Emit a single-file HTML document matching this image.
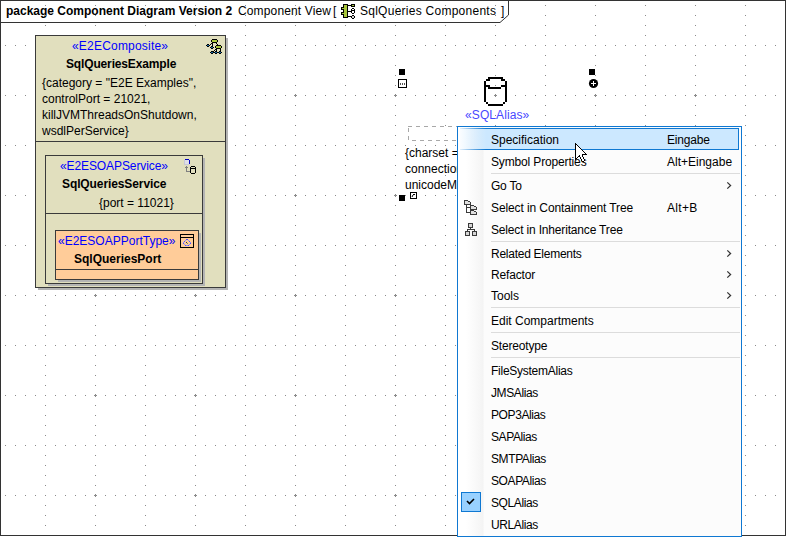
<!DOCTYPE html>
<html><head><meta charset="utf-8">
<style>
html,body{margin:0;padding:0;}
body{width:786px;height:537px;overflow:hidden;position:relative;background:#fff;font-family:"Liberation Sans",sans-serif;}
.a{position:absolute;}
.t{position:absolute;font-size:12px;line-height:16px;white-space:pre;color:#000;}
.b{font-weight:bold;}
.st{color:#0000ff;}
.mi{position:absolute;left:491px;font-size:12px;line-height:16px;white-space:pre;color:#000;}
.sc{position:absolute;left:667px;font-size:12px;line-height:16px;white-space:pre;color:#000;}
.sep{position:absolute;left:491px;width:249px;height:1px;background:#dcdcdc;}
svg{position:absolute;left:0;top:0;}
</style></head>
<body>
<div class="a" style="left:0;top:0;width:786px;height:536px;box-sizing:border-box;border:1px solid #333;"></div>
<svg width="786" height="537"><path d="M0 22.5 H500 L508.5 15 V0" fill="none" stroke="#333" stroke-width="1"/></svg>
<div class="t b" style="left:6px;top:3px;">package Component Diagram Version 2</div>
<div class="t" style="left:238px;top:3px;letter-spacing:0.14px">Component View</div>
<div class="t" style="left:333px;top:3px;">[</div>
<div class="t" style="left:360px;top:3px;letter-spacing:0.26px">SqlQueries Components</div>
<div class="t" style="left:501px;top:3px;">]</div>
<svg width="786" height="537" shape-rendering="crispEdges">
  <defs>
    <pattern id="gh" x="0" y="0" width="10" height="50" patternUnits="userSpaceOnUse"><rect x="5" y="45" width="1" height="1" fill="#8a8a8a"/></pattern>
    <pattern id="gv" x="0" y="0" width="50" height="10" patternUnits="userSpaceOnUse"><rect x="45" y="5" width="1" height="1" fill="#8a8a8a"/></pattern>
    <pattern id="gc" x="0" y="0" width="100" height="100" patternUnits="userSpaceOnUse"><rect x="94" y="95" width="3" height="1" fill="#8a8a8a"/><rect x="95" y="94" width="1" height="3" fill="#8a8a8a"/></pattern>
  </defs>
  <rect x="1" y="23" width="784" height="512" fill="url(#gh)"/>
  <rect x="1" y="1" width="784" height="534" fill="url(#gv)"/>
  <rect x="1" y="1" width="784" height="534" fill="url(#gc)"/>
  <rect x="1" y="1" width="784" height="22" fill="url(#gh)"/>
</svg>
<svg width="786" height="537" shape-rendering="crispEdges"><rect x="343" y="4" width="5" height="1" fill="#000"/><rect x="351" y="4" width="4" height="1" fill="#000"/><rect x="343" y="5" width="1" height="1" fill="#000"/><rect x="344" y="5" width="3" height="1" fill="#a8c63c"/><rect x="347" y="5" width="5" height="1" fill="#000"/><rect x="352" y="5" width="2" height="1" fill="#a8c63c"/><rect x="354" y="5" width="1" height="1" fill="#000"/><rect x="343" y="6" width="1" height="1" fill="#000"/><rect x="344" y="6" width="3" height="1" fill="#a8c63c"/><rect x="347" y="6" width="1" height="1" fill="#000"/><rect x="351" y="6" width="4" height="1" fill="#000"/><rect x="341" y="7" width="3" height="1" fill="#000"/><rect x="344" y="7" width="3" height="1" fill="#a8c63c"/><rect x="347" y="7" width="1" height="1" fill="#000"/><rect x="341" y="8" width="1" height="1" fill="#000"/><rect x="342" y="8" width="5" height="1" fill="#a8c63c"/><rect x="347" y="8" width="1" height="1" fill="#000"/><rect x="352" y="8" width="2" height="1" fill="#000"/><rect x="341" y="9" width="3" height="1" fill="#000"/><rect x="344" y="9" width="3" height="1" fill="#a8c63c"/><rect x="347" y="9" width="1" height="1" fill="#000"/><rect x="351" y="9" width="1" height="1" fill="#000"/><rect x="352" y="9" width="2" height="1" fill="#fff"/><rect x="354" y="9" width="1" height="1" fill="#000"/><rect x="343" y="10" width="1" height="1" fill="#000"/><rect x="344" y="10" width="3" height="1" fill="#a8c63c"/><rect x="347" y="10" width="1" height="1" fill="#000"/><rect x="351" y="10" width="4" height="1" fill="#000"/><rect x="343" y="11" width="1" height="1" fill="#000"/><rect x="344" y="11" width="3" height="1" fill="#a8c63c"/><rect x="347" y="11" width="5" height="1" fill="#000"/><rect x="352" y="11" width="2" height="1" fill="#fff"/><rect x="354" y="11" width="1" height="1" fill="#000"/><rect x="341" y="12" width="3" height="1" fill="#000"/><rect x="344" y="12" width="3" height="1" fill="#a8c63c"/><rect x="347" y="12" width="1" height="1" fill="#000"/><rect x="351" y="12" width="1" height="1" fill="#000"/><rect x="352" y="12" width="2" height="1" fill="#fff"/><rect x="354" y="12" width="1" height="1" fill="#000"/><rect x="341" y="13" width="1" height="1" fill="#000"/><rect x="342" y="13" width="5" height="1" fill="#a8c63c"/><rect x="347" y="13" width="1" height="1" fill="#000"/><rect x="352" y="13" width="2" height="1" fill="#000"/><rect x="341" y="14" width="3" height="1" fill="#000"/><rect x="344" y="14" width="3" height="1" fill="#a8c63c"/><rect x="347" y="14" width="1" height="1" fill="#000"/><rect x="343" y="15" width="1" height="1" fill="#000"/><rect x="344" y="15" width="3" height="1" fill="#a8c63c"/><rect x="347" y="15" width="1" height="1" fill="#000"/><rect x="352" y="15" width="2" height="1" fill="#000"/><rect x="343" y="16" width="1" height="1" fill="#000"/><rect x="344" y="16" width="3" height="1" fill="#a8c63c"/><rect x="347" y="16" width="5" height="1" fill="#000"/><rect x="352" y="16" width="2" height="1" fill="#d8d8d8"/><rect x="354" y="16" width="1" height="1" fill="#000"/><rect x="343" y="17" width="5" height="1" fill="#000"/><rect x="351" y="17" width="1" height="1" fill="#000"/><rect x="352" y="17" width="2" height="1" fill="#d8d8d8"/><rect x="354" y="17" width="1" height="1" fill="#000"/><rect x="352" y="18" width="2" height="1" fill="#000"/></svg>

<div class="a" style="left:38px;top:38px;width:190px;height:252px;background:#b4b4b4;"></div>
<div class="a" style="left:35px;top:35px;width:191px;height:253px;box-sizing:border-box;border:1px solid #3a3a3a;background:#e1dfbe;"></div>
<div class="a" style="left:36px;top:141px;width:189px;height:1px;background:#3a3a3a;"></div>
<div class="t st" style="left:72px;top:38px;letter-spacing:0.2px">«E2EComposite»</div>
<div class="t b" style="left:66px;top:56px;letter-spacing:-0.15px">SqlQueriesExample</div>
<div class="t" style="left:42px;top:75px;">{category = "E2E Examples",</div>
<div class="t" style="left:42px;top:91px;">controlPort = 21021,</div>
<div class="t" style="left:42px;top:107px;">killJVMThreadsOnShutdown,</div>
<div class="t" style="left:42px;top:123px;">wsdlPerService}</div>
<div class="a" style="left:48px;top:158px;width:157px;height:128px;background:#b4b4b4;"></div>
<div class="a" style="left:45px;top:155px;width:158px;height:129px;box-sizing:border-box;border:1px solid #3a3a3a;background:#e1dfbe;"></div>
<div class="a" style="left:46px;top:213px;width:156px;height:1px;background:#3a3a3a;"></div>
<div class="t st" style="left:60px;top:158px;letter-spacing:-0.1px">«E2ESOAPService»</div>
<div class="t b" style="left:62px;top:176px;letter-spacing:-0.1px">SqlQueriesService</div>
<div class="t" style="left:99px;top:195px;">{port = 11021}</div>
<div class="a" style="left:58px;top:233px;width:143px;height:49px;background:#b4b4b4;"></div>
<div class="a" style="left:55px;top:230px;width:144px;height:50px;box-sizing:border-box;border:1px solid #3a3a3a;background:#ffcc99;"></div>
<div class="a" style="left:56px;top:269px;width:142px;height:1px;background:#3a3a3a;"></div>
<div class="t st" style="left:58px;top:233px;">«E2ESOAPPortType»</div>
<div class="t b" style="left:74px;top:251px;">SqlQueriesPort</div>
<svg width="786" height="537" shape-rendering="crispEdges"><rect x="212" y="39" width="5" height="1" fill="#000"/><rect x="211" y="40" width="1" height="1" fill="#000"/><rect x="212" y="40" width="5" height="1" fill="#a8c63c"/><rect x="217" y="40" width="1" height="1" fill="#000"/><rect x="211" y="41" width="1" height="1" fill="#000"/><rect x="212" y="41" width="5" height="1" fill="#a8c63c"/><rect x="217" y="41" width="1" height="1" fill="#000"/><rect x="212" y="42" width="5" height="1" fill="#000"/><rect x="211" y="43" width="2" height="1" fill="#000"/><rect x="216" y="43" width="1" height="1" fill="#000"/><rect x="207" y="44" width="2" height="1" fill="#000"/><rect x="210" y="44" width="1" height="1" fill="#000"/><rect x="212" y="44" width="1" height="1" fill="#000"/><rect x="217" y="44" width="1" height="1" fill="#000"/><rect x="206" y="45" width="1" height="1" fill="#000"/><rect x="207" y="45" width="2" height="1" fill="#1e6aa0"/><rect x="209" y="45" width="1" height="1" fill="#000"/><rect x="212" y="45" width="1" height="1" fill="#000"/><rect x="216" y="45" width="5" height="1" fill="#000"/><rect x="207" y="46" width="2" height="1" fill="#000"/><rect x="211" y="46" width="2" height="1" fill="#000"/><rect x="215" y="46" width="1" height="1" fill="#000"/><rect x="216" y="46" width="5" height="1" fill="#a8c63c"/><rect x="221" y="46" width="1" height="1" fill="#000"/><rect x="210" y="47" width="1" height="1" fill="#000"/><rect x="211" y="47" width="2" height="1" fill="#1e6aa0"/><rect x="213" y="47" width="1" height="1" fill="#000"/><rect x="215" y="47" width="1" height="1" fill="#000"/><rect x="216" y="47" width="5" height="1" fill="#a8c63c"/><rect x="221" y="47" width="1" height="1" fill="#000"/><rect x="211" y="48" width="2" height="1" fill="#000"/><rect x="216" y="48" width="5" height="1" fill="#000"/><rect x="215" y="49" width="2" height="1" fill="#000"/><rect x="220" y="49" width="1" height="1" fill="#000"/><rect x="214" y="50" width="1" height="1" fill="#000"/><rect x="216" y="50" width="1" height="1" fill="#000"/><rect x="220" y="50" width="1" height="1" fill="#000"/><rect x="211" y="51" width="3" height="1" fill="#000"/><rect x="215" y="51" width="2" height="1" fill="#000"/><rect x="219" y="51" width="2" height="1" fill="#000"/><rect x="210" y="52" width="1" height="1" fill="#000"/><rect x="211" y="52" width="2" height="1" fill="#1e6aa0"/><rect x="213" y="52" width="2" height="1" fill="#000"/><rect x="215" y="52" width="2" height="1" fill="#1e6aa0"/><rect x="217" y="52" width="2" height="1" fill="#000"/><rect x="219" y="52" width="2" height="1" fill="#1e6aa0"/><rect x="221" y="52" width="1" height="1" fill="#000"/><rect x="211" y="53" width="2" height="1" fill="#000"/><rect x="215" y="53" width="2" height="1" fill="#000"/><rect x="219" y="53" width="2" height="1" fill="#000"/><rect x="185" y="159" width="4" height="1" fill="#0000c0"/><rect x="184" y="160" width="1" height="1" fill="#c8c8d8"/><rect x="185" y="160" width="4" height="1" fill="#e0e0e8"/><rect x="189" y="160" width="1" height="1" fill="#0000c0"/><rect x="184" y="161" width="1" height="1" fill="#c8c8d8"/><rect x="185" y="161" width="4" height="1" fill="#e0e0e8"/><rect x="189" y="161" width="1" height="1" fill="#0000c0"/><rect x="184" y="162" width="1" height="1" fill="#c8c8d8"/><rect x="185" y="162" width="4" height="1" fill="#e0e0e8"/><rect x="189" y="162" width="1" height="1" fill="#0000c0"/><rect x="184" y="163" width="1" height="1" fill="#c8c8d8"/><rect x="185" y="163" width="4" height="1" fill="#e0e0e8"/><rect x="189" y="163" width="1" height="1" fill="#0000c0"/><rect x="184" y="164" width="5" height="1" fill="#c8c8d8"/><rect x="186" y="166" width="1" height="1" fill="#808080"/><rect x="191" y="166" width="4" height="1" fill="#000"/><rect x="185" y="167" width="3" height="1" fill="#808080"/><rect x="190" y="167" width="1" height="1" fill="#000"/><rect x="195" y="167" width="1" height="1" fill="#000"/><rect x="186" y="168" width="1" height="1" fill="#808080"/><rect x="190" y="168" width="6" height="1" fill="#000"/><rect x="186" y="169" width="1" height="1" fill="#808080"/><rect x="190" y="169" width="1" height="1" fill="#000"/><rect x="195" y="169" width="1" height="1" fill="#000"/><rect x="186" y="170" width="1" height="1" fill="#808080"/><rect x="190" y="170" width="1" height="1" fill="#000"/><rect x="195" y="170" width="1" height="1" fill="#000"/><rect x="186" y="171" width="4" height="1" fill="#808080"/><rect x="190" y="171" width="1" height="1" fill="#000"/><rect x="195" y="171" width="1" height="1" fill="#000"/><rect x="190" y="172" width="1" height="1" fill="#000"/><rect x="195" y="172" width="1" height="1" fill="#000"/><rect x="191" y="173" width="4" height="1" fill="#000"/><rect x="180.5" y="234.5" width="13" height="13" fill="none" stroke="#000"/><rect x="181" y="237" width="12" height="1" fill="#000"/><rect x="186" y="239" width="2" height="1" fill="#5050ff"/><rect x="185" y="240" width="1" height="1" fill="#9090ff"/><rect x="188" y="240" width="1" height="1" fill="#9090ff"/><rect x="184" y="241" width="1" height="1" fill="#5050ff"/><rect x="189" y="241" width="1" height="1" fill="#5050ff"/><rect x="183" y="242" width="1" height="1" fill="#9090ff"/><rect x="190" y="242" width="1" height="1" fill="#9090ff"/><rect x="183" y="243" width="1" height="1" fill="#5050ff"/><rect x="190" y="243" width="1" height="1" fill="#5050ff"/><rect x="184" y="244" width="1" height="1" fill="#9090ff"/><rect x="189" y="244" width="1" height="1" fill="#9090ff"/><rect x="185" y="245" width="1" height="1" fill="#5050ff"/><rect x="186" y="245" width="2" height="1" fill="#9090ff"/><rect x="188" y="245" width="1" height="1" fill="#5050ff"/><rect x="186" y="242" width="1" height="1" fill="#333"/><rect x="187" y="243" width="1" height="1" fill="#7a9a50"/></svg>
<svg width="786" height="537" shape-rendering="crispEdges"><rect x="399" y="69" width="6" height="6" fill="#000"/><rect x="398.5" y="79.5" width="8" height="8" fill="#fff" stroke="#000"/><rect x="400" y="83" width="1" height="2" fill="#555"/><rect x="402" y="83" width="1" height="2" fill="#555"/><rect x="404" y="83" width="1" height="2" fill="#555"/><rect x="589" y="69" width="6" height="6" fill="#000"/><circle cx="593.5" cy="83.5" r="4.6" fill="#000" shape-rendering="auto"/><rect x="593" y="81" width="1" height="5" fill="#fff"/><rect x="591" y="83" width="5" height="1" fill="#fff"/><rect x="488" y="77" width="15" height="1" fill="#000"/><rect x="488" y="78" width="15" height="1" fill="#000"/><rect x="486" y="79" width="4" height="1" fill="#000"/><rect x="501" y="79" width="4" height="1" fill="#000"/><rect x="486" y="80" width="4" height="1" fill="#000"/><rect x="501" y="80" width="4" height="1" fill="#000"/><rect x="484" y="81" width="2" height="1" fill="#000"/><rect x="505" y="81" width="2" height="1" fill="#000"/><rect x="484" y="82" width="2" height="1" fill="#000"/><rect x="505" y="82" width="2" height="1" fill="#000"/><rect x="484" y="83" width="2" height="1" fill="#000"/><rect x="505" y="83" width="2" height="1" fill="#000"/><rect x="484" y="84" width="2" height="1" fill="#000"/><rect x="505" y="84" width="2" height="1" fill="#000"/><rect x="484" y="85" width="6" height="1" fill="#000"/><rect x="501" y="85" width="6" height="1" fill="#000"/><rect x="484" y="86" width="6" height="1" fill="#000"/><rect x="501" y="86" width="6" height="1" fill="#000"/><rect x="484" y="87" width="2" height="1" fill="#000"/><rect x="488" y="87" width="13" height="1" fill="#000"/><rect x="505" y="87" width="2" height="1" fill="#000"/><rect x="484" y="88" width="2" height="1" fill="#000"/><rect x="488" y="88" width="13" height="1" fill="#000"/><rect x="505" y="88" width="2" height="1" fill="#000"/><rect x="484" y="89" width="2" height="1" fill="#000"/><rect x="505" y="89" width="2" height="1" fill="#000"/><rect x="484" y="90" width="2" height="1" fill="#000"/><rect x="505" y="90" width="2" height="1" fill="#000"/><rect x="484" y="91" width="2" height="1" fill="#000"/><rect x="505" y="91" width="2" height="1" fill="#000"/><rect x="484" y="92" width="2" height="1" fill="#000"/><rect x="505" y="92" width="2" height="1" fill="#000"/><rect x="484" y="93" width="2" height="1" fill="#000"/><rect x="505" y="93" width="2" height="1" fill="#000"/><rect x="484" y="94" width="2" height="1" fill="#000"/><rect x="505" y="94" width="2" height="1" fill="#000"/><rect x="484" y="95" width="2" height="1" fill="#000"/><rect x="505" y="95" width="2" height="1" fill="#000"/><rect x="484" y="96" width="2" height="1" fill="#000"/><rect x="505" y="96" width="2" height="1" fill="#000"/><rect x="484" y="97" width="2" height="1" fill="#000"/><rect x="505" y="97" width="2" height="1" fill="#000"/><rect x="484" y="98" width="2" height="1" fill="#000"/><rect x="505" y="98" width="2" height="1" fill="#000"/><rect x="484" y="99" width="2" height="1" fill="#000"/><rect x="505" y="99" width="2" height="1" fill="#000"/><rect x="484" y="100" width="2" height="1" fill="#000"/><rect x="505" y="100" width="2" height="1" fill="#000"/><rect x="484" y="101" width="2" height="1" fill="#000"/><rect x="505" y="101" width="2" height="1" fill="#000"/><rect x="486" y="102" width="2" height="1" fill="#000"/><rect x="503" y="102" width="2" height="1" fill="#000"/><rect x="486" y="103" width="2" height="1" fill="#000"/><rect x="503" y="103" width="2" height="1" fill="#000"/><rect x="488" y="104" width="15" height="1" fill="#000"/><rect x="488" y="105" width="15" height="1" fill="#000"/><rect x="408" y="126" width="4" height="1" fill="#a8a8a8"/><rect x="416" y="126" width="4" height="1" fill="#a8a8a8"/><rect x="424" y="126" width="4" height="1" fill="#a8a8a8"/><rect x="432" y="126" width="4" height="1" fill="#a8a8a8"/><rect x="440" y="126" width="4" height="1" fill="#a8a8a8"/><rect x="448" y="126" width="4" height="1" fill="#a8a8a8"/><rect x="456" y="126" width="4" height="1" fill="#a8a8a8"/><rect x="412" y="140" width="4" height="1" fill="#a8a8a8"/><rect x="420" y="140" width="4" height="1" fill="#a8a8a8"/><rect x="428" y="140" width="4" height="1" fill="#a8a8a8"/><rect x="436" y="140" width="4" height="1" fill="#a8a8a8"/><rect x="444" y="140" width="4" height="1" fill="#a8a8a8"/><rect x="452" y="140" width="4" height="1" fill="#a8a8a8"/><rect x="408" y="128" width="1" height="4" fill="#a8a8a8"/><rect x="408" y="136" width="1" height="4" fill="#a8a8a8"/><rect x="399" y="195" width="6" height="6" fill="#000"/><rect x="410.5" y="192.5" width="6" height="6" fill="#fff" stroke="#000"/><path d="M412 197 L413 195 L414 194 L415 195" fill="none" stroke="#000" shape-rendering="auto"/></svg>
<div class="t" style="left:465px;top:107px;letter-spacing:0.1px;color:#4848ff">«SQLAlias»</div>
<div class="t" style="left:405px;top:145px;">{charset = "UTF-8",</div>
<div class="t" style="left:405px;top:161px;">connectionURL = "",</div>
<div class="t" style="left:405px;top:177px;">unicodeMode}</div>
<div class="a" style="left:457px;top:126px;width:285px;height:411px;box-sizing:border-box;border:1px solid #0f78d2;background:#fcfcfc;"></div>
<div class="a" style="left:458px;top:127px;width:26px;height:409px;background:linear-gradient(to right,#fff 0,#fff 8px,#f4f4f4 25px,#fbfbfb 26px);"></div>
<div class="a" style="left:460px;top:128px;width:279px;height:22px;box-sizing:border-box;border-right:1px solid #0f78d2;background:linear-gradient(to right,rgba(204,232,255,0.1) 0,#cce8ff 26px);"></div><div class="a" style="left:460px;top:128px;width:279px;height:1px;background:linear-gradient(to right,rgba(15,120,210,0.1) 0,#0f78d2 26px);"></div><div class="a" style="left:460px;top:149px;width:279px;height:1px;background:linear-gradient(to right,rgba(15,120,210,0.1) 0,#0f78d2 26px);"></div>
<div class="mi" style="top:132px">Specification</div>
<div class="sc" style="top:132px;letter-spacing:-0.2px">Eingabe</div>
<div class="mi" style="top:154px;letter-spacing:-0.15px">Symbol Properties</div>
<div class="sc" style="top:154px;">Alt+Eingabe</div>
<div class="sep" style="top:173px"></div>
<div class="mi" style="top:178px;letter-spacing:-0.25px">Go To</div>
<div class="mi" style="top:200px;letter-spacing:-0.1px">Select in Containment Tree</div>
<div class="sc" style="top:200px;letter-spacing:0.3px">Alt+B</div>
<div class="mi" style="top:222px;letter-spacing:-0.17px">Select in Inheritance Tree</div>
<div class="sep" style="top:241px"></div>
<div class="mi" style="top:246px;letter-spacing:-0.26px">Related Elements</div>
<div class="mi" style="top:267px;letter-spacing:-0.16px">Refactor</div>
<div class="mi" style="top:288px">Tools</div>
<div class="sep" style="top:307px"></div>
<div class="mi" style="top:313px">Edit Compartments</div>
<div class="sep" style="top:332px"></div>
<div class="mi" style="top:338px;letter-spacing:-0.17px">Stereotype</div>
<div class="sep" style="top:357px"></div>
<div class="mi" style="top:363px;letter-spacing:-0.26px">FileSystemAlias</div>
<div class="mi" style="top:385px;letter-spacing:-0.4px">JMSAlias</div>
<div class="mi" style="top:407px;letter-spacing:-0.4px">POP3Alias</div>
<div class="mi" style="top:429px;letter-spacing:-0.4px">SAPAlias</div>
<div class="mi" style="top:451px;letter-spacing:-0.4px">SMTPAlias</div>
<div class="mi" style="top:473px;letter-spacing:-0.4px">SOAPAlias</div>
<div class="mi" style="top:495px;letter-spacing:-0.4px">SQLAlias</div>
<div class="mi" style="top:517px;letter-spacing:-0.4px">URLAlias</div>
<svg width="786" height="537" shape-rendering="crispEdges"><path d="M727.3 182.4 L730.6 185.5 L727.3 188.6" fill="none" stroke="#333" stroke-width="1.25" shape-rendering="auto"/><path d="M727.3 250.4 L730.6 253.5 L727.3 256.6" fill="none" stroke="#333" stroke-width="1.25" shape-rendering="auto"/><path d="M727.3 271.4 L730.6 274.5 L727.3 277.6" fill="none" stroke="#333" stroke-width="1.25" shape-rendering="auto"/><path d="M727.3 292.4 L730.6 295.5 L727.3 298.6" fill="none" stroke="#333" stroke-width="1.25" shape-rendering="auto"/><rect x="464" y="200" width="4" height="1" fill="#3a3a3a"/><rect x="464" y="201" width="1" height="1" fill="#3a3a3a"/><rect x="465" y="201" width="3" height="1" fill="#e0e0e0"/><rect x="468" y="201" width="2" height="1" fill="#3a3a3a"/><rect x="464" y="202" width="1" height="1" fill="#3a3a3a"/><rect x="465" y="202" width="5" height="1" fill="#e0e0e0"/><rect x="470" y="202" width="1" height="1" fill="#3a3a3a"/><rect x="464" y="203" width="1" height="1" fill="#3a3a3a"/><rect x="465" y="203" width="5" height="1" fill="#e0e0e0"/><rect x="470" y="203" width="1" height="1" fill="#3a3a3a"/><rect x="464" y="204" width="7" height="1" fill="#3a3a3a"/><rect x="466" y="205" width="1" height="1" fill="#3a3a3a"/><rect x="470" y="205" width="4" height="1" fill="#3a3a3a"/><rect x="466" y="206" width="1" height="1" fill="#3a3a3a"/><rect x="470" y="206" width="1" height="1" fill="#3a3a3a"/><rect x="471" y="206" width="3" height="1" fill="#e0e0e0"/><rect x="474" y="206" width="2" height="1" fill="#3a3a3a"/><rect x="466" y="207" width="5" height="1" fill="#3a3a3a"/><rect x="471" y="207" width="5" height="1" fill="#e0e0e0"/><rect x="476" y="207" width="1" height="1" fill="#3a3a3a"/><rect x="466" y="208" width="1" height="1" fill="#3a3a3a"/><rect x="470" y="208" width="1" height="1" fill="#3a3a3a"/><rect x="471" y="208" width="5" height="1" fill="#e0e0e0"/><rect x="476" y="208" width="1" height="1" fill="#3a3a3a"/><rect x="466" y="209" width="1" height="1" fill="#3a3a3a"/><rect x="470" y="209" width="7" height="1" fill="#3a3a3a"/><rect x="466" y="210" width="1" height="1" fill="#3a3a3a"/><rect x="470" y="210" width="4" height="1" fill="#3a3a3a"/><rect x="466" y="211" width="1" height="1" fill="#3a3a3a"/><rect x="470" y="211" width="1" height="1" fill="#3a3a3a"/><rect x="471" y="211" width="3" height="1" fill="#e0e0e0"/><rect x="474" y="211" width="2" height="1" fill="#3a3a3a"/><rect x="466" y="212" width="5" height="1" fill="#3a3a3a"/><rect x="471" y="212" width="5" height="1" fill="#e0e0e0"/><rect x="476" y="212" width="1" height="1" fill="#3a3a3a"/><rect x="470" y="213" width="1" height="1" fill="#3a3a3a"/><rect x="471" y="213" width="5" height="1" fill="#e0e0e0"/><rect x="476" y="213" width="1" height="1" fill="#3a3a3a"/><rect x="470" y="214" width="7" height="1" fill="#3a3a3a"/><rect x="468" y="223" width="5" height="1" fill="#3a3a3a"/><rect x="468" y="224" width="1" height="1" fill="#3a3a3a"/><rect x="469" y="224" width="3" height="1" fill="#d6d6d6"/><rect x="472" y="224" width="1" height="1" fill="#3a3a3a"/><rect x="468" y="225" width="1" height="1" fill="#3a3a3a"/><rect x="469" y="225" width="3" height="1" fill="#d6d6d6"/><rect x="472" y="225" width="1" height="1" fill="#3a3a3a"/><rect x="468" y="226" width="1" height="1" fill="#3a3a3a"/><rect x="469" y="226" width="3" height="1" fill="#d6d6d6"/><rect x="472" y="226" width="1" height="1" fill="#3a3a3a"/><rect x="468" y="227" width="5" height="1" fill="#3a3a3a"/><rect x="470" y="228" width="1" height="1" fill="#3a3a3a"/><rect x="467" y="229" width="8" height="1" fill="#3a3a3a"/><rect x="467" y="230" width="1" height="1" fill="#3a3a3a"/><rect x="474" y="230" width="1" height="1" fill="#3a3a3a"/><rect x="465" y="231" width="5" height="1" fill="#3a3a3a"/><rect x="472" y="231" width="5" height="1" fill="#3a3a3a"/><rect x="465" y="232" width="1" height="1" fill="#3a3a3a"/><rect x="466" y="232" width="3" height="1" fill="#d6d6d6"/><rect x="469" y="232" width="1" height="1" fill="#3a3a3a"/><rect x="472" y="232" width="1" height="1" fill="#3a3a3a"/><rect x="473" y="232" width="3" height="1" fill="#d6d6d6"/><rect x="476" y="232" width="1" height="1" fill="#3a3a3a"/><rect x="465" y="233" width="1" height="1" fill="#3a3a3a"/><rect x="466" y="233" width="3" height="1" fill="#d6d6d6"/><rect x="469" y="233" width="1" height="1" fill="#3a3a3a"/><rect x="472" y="233" width="1" height="1" fill="#3a3a3a"/><rect x="473" y="233" width="3" height="1" fill="#d6d6d6"/><rect x="476" y="233" width="1" height="1" fill="#3a3a3a"/><rect x="465" y="234" width="1" height="1" fill="#3a3a3a"/><rect x="466" y="234" width="3" height="1" fill="#d6d6d6"/><rect x="469" y="234" width="1" height="1" fill="#3a3a3a"/><rect x="472" y="234" width="1" height="1" fill="#3a3a3a"/><rect x="473" y="234" width="3" height="1" fill="#d6d6d6"/><rect x="476" y="234" width="1" height="1" fill="#3a3a3a"/><rect x="465" y="235" width="5" height="1" fill="#3a3a3a"/><rect x="472" y="235" width="5" height="1" fill="#3a3a3a"/><rect x="461.5" y="492.5" width="19" height="19" fill="#99d1ff" stroke="#0f78d2"/><path d="M467 501 L469.5 503.5 L474 499" fill="none" stroke="#000" stroke-width="1.6" shape-rendering="auto"/><rect x="575" y="143" width="1" height="1" fill="#000"/><rect x="575" y="144" width="2" height="1" fill="#000"/><rect x="575" y="145" width="1" height="1" fill="#000"/><rect x="576" y="145" width="1" height="1" fill="#fff"/><rect x="577" y="145" width="1" height="1" fill="#000"/><rect x="575" y="146" width="1" height="1" fill="#000"/><rect x="576" y="146" width="2" height="1" fill="#fff"/><rect x="578" y="146" width="1" height="1" fill="#000"/><rect x="575" y="147" width="1" height="1" fill="#000"/><rect x="576" y="147" width="3" height="1" fill="#fff"/><rect x="579" y="147" width="1" height="1" fill="#000"/><rect x="575" y="148" width="1" height="1" fill="#000"/><rect x="576" y="148" width="4" height="1" fill="#fff"/><rect x="580" y="148" width="1" height="1" fill="#000"/><rect x="575" y="149" width="1" height="1" fill="#000"/><rect x="576" y="149" width="5" height="1" fill="#fff"/><rect x="581" y="149" width="1" height="1" fill="#000"/><rect x="575" y="150" width="1" height="1" fill="#000"/><rect x="576" y="150" width="6" height="1" fill="#fff"/><rect x="582" y="150" width="1" height="1" fill="#000"/><rect x="575" y="151" width="1" height="1" fill="#000"/><rect x="576" y="151" width="7" height="1" fill="#fff"/><rect x="583" y="151" width="1" height="1" fill="#000"/><rect x="575" y="152" width="1" height="1" fill="#000"/><rect x="576" y="152" width="8" height="1" fill="#fff"/><rect x="584" y="152" width="1" height="1" fill="#000"/><rect x="575" y="153" width="1" height="1" fill="#000"/><rect x="576" y="153" width="9" height="1" fill="#fff"/><rect x="585" y="153" width="1" height="1" fill="#000"/><rect x="575" y="154" width="1" height="1" fill="#000"/><rect x="576" y="154" width="6" height="1" fill="#fff"/><rect x="582" y="154" width="5" height="1" fill="#000"/><rect x="575" y="155" width="1" height="1" fill="#000"/><rect x="576" y="155" width="3" height="1" fill="#fff"/><rect x="579" y="155" width="1" height="1" fill="#000"/><rect x="580" y="155" width="2" height="1" fill="#fff"/><rect x="582" y="155" width="1" height="1" fill="#000"/><rect x="575" y="156" width="1" height="1" fill="#000"/><rect x="576" y="156" width="2" height="1" fill="#fff"/><rect x="578" y="156" width="2" height="1" fill="#000"/><rect x="580" y="156" width="2" height="1" fill="#fff"/><rect x="582" y="156" width="1" height="1" fill="#000"/><rect x="575" y="157" width="1" height="1" fill="#000"/><rect x="576" y="157" width="1" height="1" fill="#fff"/><rect x="577" y="157" width="1" height="1" fill="#000"/><rect x="580" y="157" width="1" height="1" fill="#000"/><rect x="581" y="157" width="2" height="1" fill="#fff"/><rect x="583" y="157" width="1" height="1" fill="#000"/><rect x="575" y="158" width="2" height="1" fill="#000"/><rect x="580" y="158" width="1" height="1" fill="#000"/><rect x="581" y="158" width="2" height="1" fill="#fff"/><rect x="583" y="158" width="1" height="1" fill="#000"/><rect x="575" y="159" width="1" height="1" fill="#000"/><rect x="581" y="159" width="1" height="1" fill="#000"/><rect x="582" y="159" width="2" height="1" fill="#fff"/><rect x="584" y="159" width="1" height="1" fill="#000"/><rect x="581" y="160" width="1" height="1" fill="#000"/><rect x="582" y="160" width="2" height="1" fill="#fff"/><rect x="584" y="160" width="1" height="1" fill="#000"/><rect x="582" y="161" width="2" height="1" fill="#000"/></svg>
</body></html>
